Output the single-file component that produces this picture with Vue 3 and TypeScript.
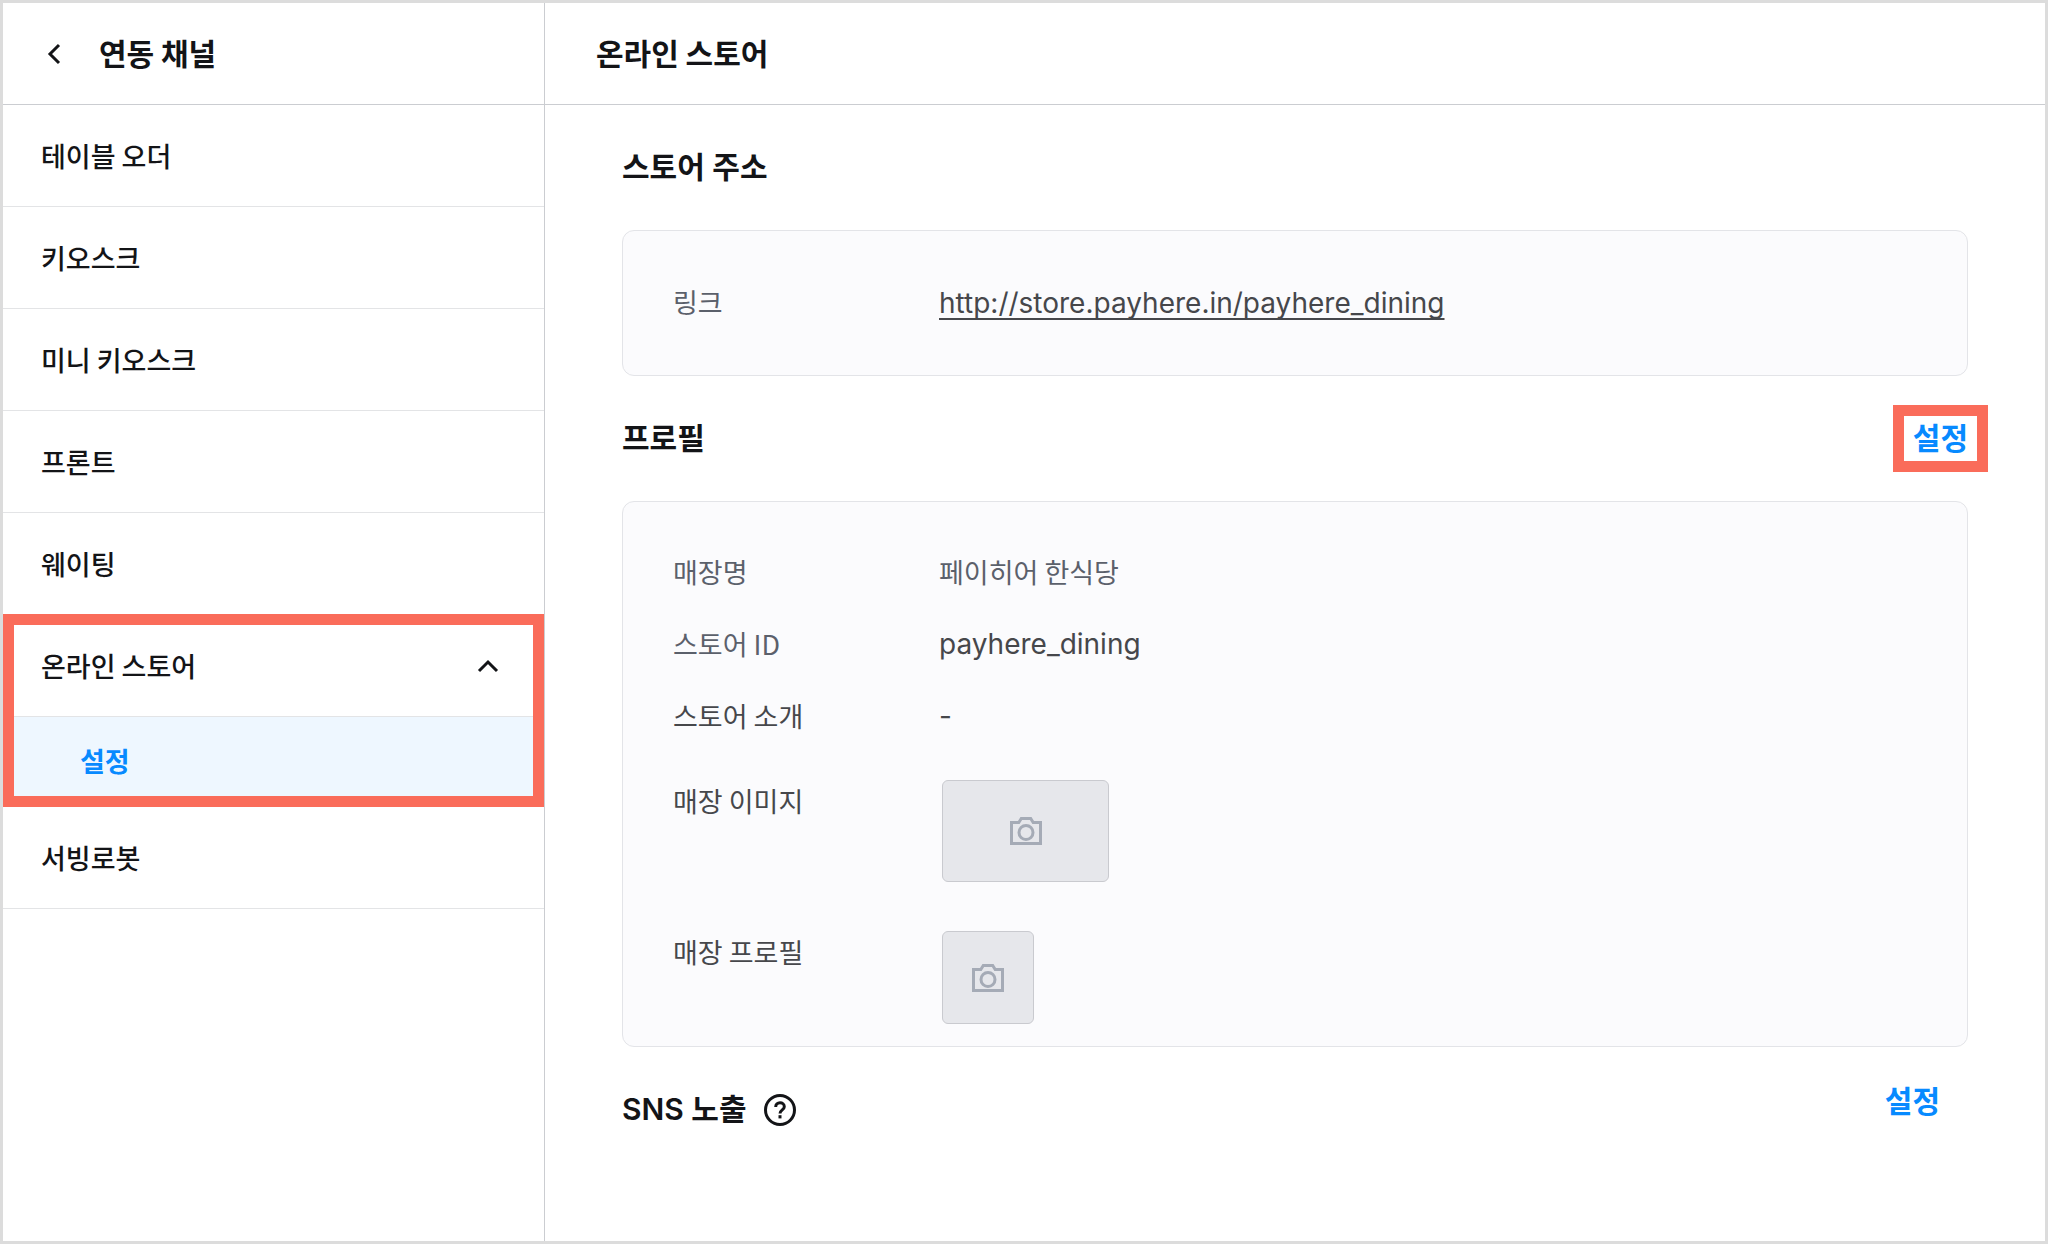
<script setup lang="ts">
import { ref } from 'vue'

interface Channel {
  label: string
  children?: string[]
}

const channels: Channel[] = [
  { label: '테이블 오더' },
  { label: '키오스크' },
  { label: '미니 키오스크' },
  { label: '프론트' },
  { label: '웨이팅' },
  { label: '온라인 스토어', children: ['설정'] },
  { label: '서빙로봇' },
]

const expanded = ref(true)
</script>

<template>
  <div class="app">
    <aside class="sidebar">
      <header class="bar side-bar">
        <button class="back" type="button" aria-label="뒤로">
          <svg width="14" height="22" viewBox="0 0 14 22" fill="none" stroke="currentColor" stroke-width="3">
            <path d="M12 2 3 11l9 9" />
          </svg>
        </button>
        <h1 class="title">연동 채널</h1>
      </header>
      <nav aria-label="연동 채널">
        <template v-for="channel in channels" :key="channel.label">
          <div v-if="channel.children" class="group">
            <button class="item" type="button" :aria-expanded="expanded" @click="expanded = !expanded">
              <span>{{ channel.label }}</span>
              <svg class="caret" :class="{ closed: !expanded }" width="22" height="14" viewBox="0 0 22 14" fill="none" stroke="currentColor" stroke-width="3">
                <path d="M2 12l9-9 9 9" />
              </svg>
            </button>
            <template v-if="expanded">
              <a v-for="child in channel.children" :key="child" class="child" href="#" aria-current="page">{{ child }}</a>
            </template>
          </div>
          <a v-else class="item" href="#">{{ channel.label }}</a>
        </template>
      </nav>
    </aside>

    <main class="main">
      <header class="bar main-bar">
        <h2 class="title">온라인 스토어</h2>
      </header>
      <div class="content">
        <section>
          <div class="heading">
            <h3>스토어 주소</h3>
          </div>
          <dl class="card">
            <div class="row link-row">
              <dt class="cool">링크</dt>
              <dd><a class="url" href="http://store.payhere.in/payhere_dining">http://store.payhere.in/payhere_dining</a></dd>
            </div>
          </dl>
        </section>

        <section>
          <div class="heading">
            <h3>프로필</h3>
            <button class="action marked" type="button">설정</button>
          </div>
          <dl class="card profile">
            <div class="row">
              <dt class="cool">매장명</dt>
              <dd class="cool">페이히어 한식당</dd>
            </div>
            <div class="row">
              <dt class="cool">스토어 ID</dt>
              <dd class="latin">payhere_dining</dd>
            </div>
            <div class="row">
              <dt>스토어 소개</dt>
              <dd class="latin">-</dd>
            </div>
            <div class="row media">
              <dt>매장 이미지</dt>
              <dd class="thumb wide">
                <svg width="32" height="30" viewBox="0 0 32 30" fill="none" stroke="currentColor" stroke-width="3">
                  <path d="M1.5 6.5h7.3l2.5-4h9.4l2.5 4h7.3v21h-29z" />
                  <circle cx="16" cy="16.5" r="7" />
                </svg>
              </dd>
            </div>
            <div class="row media">
              <dt>매장 프로필</dt>
              <dd class="thumb square">
                <svg width="32" height="30" viewBox="0 0 32 30" fill="none" stroke="currentColor" stroke-width="3">
                  <path d="M1.5 6.5h7.3l2.5-4h9.4l2.5 4h7.3v21h-29z" />
                  <circle cx="16" cy="16.5" r="7" />
                </svg>
              </dd>
            </div>
          </dl>
        </section>

        <section>
          <div class="heading">
            <h3>SNS 노출</h3>
            <button class="help" type="button" aria-label="도움말">
              <svg width="32" height="32" viewBox="0 0 32 32" fill="none" stroke="currentColor" stroke-width="3">
                <circle cx="16" cy="16" r="14.5" />
                <path d="M11.7 12.9c0-2.4 1.9-4.1 4.3-4.1s4.3 1.6 4.3 3.9c0 3.100-4.300 3.300-4.300 6.800" />
                <path d="M16 21.2v3.2" />
              </svg>
            </button>
            <button class="action inset" type="button">설정</button>
          </div>
        </section>
      </div>
    </main>
  </div>
</template>

<style>
body {
  margin: 0;
  background: #fff;
}
</style>

<style scoped>
.app {
  display: flex;
  box-sizing: border-box;
  min-height: 100vh;
  border: 3px solid #dcdcdc;
  background: #fff;
  color: #131417;
  font-family: "Noto Sans CJK KR", sans-serif;
  font-size: 27px;
  line-height: 42px;
}

h1, h2, h3, dl, dd {
  margin: 0;
}

button {
  padding: 0;
  border: 0;
  background: none;
  color: inherit;
  font: inherit;
  cursor: pointer;
}

a {
  color: inherit;
  text-decoration: none;
}

svg {
  display: block;
}

.sidebar {
  flex: 0 0 541px;
  border-right: 1px solid #cbcdd1;
}

.bar {
  display: flex;
  align-items: center;
  box-sizing: border-box;
  height: 102px;
  border-bottom: 1px solid #cbcdd1;
}

.side-bar {
  gap: 38px;
  padding-left: 44px;
}

.main-bar {
  padding-left: 51px;
}

.title {
  padding-bottom: 3px;
  font-size: 30px;
  font-weight: 700;
}

.item {
  display: flex;
  align-items: center;
  justify-content: space-between;
  box-sizing: border-box;
  width: 100%;
  height: 102px;
  padding: 0 45px 0 38px;
  border-bottom: 1px solid #e3e4e6;
  font-weight: 500;
}

.caret.closed {
  transform: rotate(180deg);
}

.group {
  position: relative;
}

.group::after {
  content: "";
  position: absolute;
  inset: -1px 0 0;
  border: 11px solid #fa6c5a;
  pointer-events: none;
}

.child {
  display: flex;
  align-items: center;
  box-sizing: border-box;
  height: 90px;
  padding: 0 0 2px 77px;
  background: #eef7ff;
  color: #078aff;
  font-weight: 700;
}

.main {
  flex: 1;
  min-width: 0;
}

.content {
  padding: 0 77px;
}

.heading {
  display: flex;
  align-items: center;
  height: 125px;
}

h3 {
  padding-bottom: 2px;
  font-family: Inter, "Noto Sans CJK KR", sans-serif;
  font-size: 30px;
  font-weight: 600;
}

.action {
  position: relative;
  margin-left: auto;
  padding-bottom: 5px;
  color: #078aff;
  font-size: 30px;
  font-weight: 700;
  line-height: 40px;
}

.marked::after {
  content: "";
  position: absolute;
  inset: -11px -20px;
  border: 11px solid #fa6c5a;
}

.inset {
  padding: 0 28px 21px 0;
}

.help {
  margin-left: 17px;
}

.card {
  border: 1px solid #e3e4e8;
  border-radius: 12px;
  background: #fbfbfd;
  color: #46474b;
}

.profile {
  padding: 34px 0 22px;
}

.row {
  display: flex;
  align-items: center;
  min-height: 72px;
  padding: 0 50px;
}

.link-row {
  min-height: 142px;
  padding-bottom: 2px;
}

dt {
  flex: 0 0 266px;
}

.cool {
  color: #5b606b;
}

.url,
.latin {
  font-family: Inter, "Noto Sans CJK KR", sans-serif;
  font-size: 28px;
}

.url {
  text-decoration: underline;
  text-decoration-thickness: 2px;
  text-decoration-skip-ink: none;
  text-underline-offset: 5px;
}

.media {
  align-items: flex-start;
  padding-top: 28px;
}

.media + .media {
  padding-top: 49px;
}

.thumb {
  display: flex;
  align-items: center;
  justify-content: center;
  box-sizing: border-box;
  margin-left: 3px;
  border: 1px solid #c9cacf;
  border-radius: 6px;
  background: #e6e7eb;
  color: #a5abb6;
}

.wide {
  width: 167px;
  height: 102px;
}

.square {
  width: 92px;
  height: 93px;
}
</style>
